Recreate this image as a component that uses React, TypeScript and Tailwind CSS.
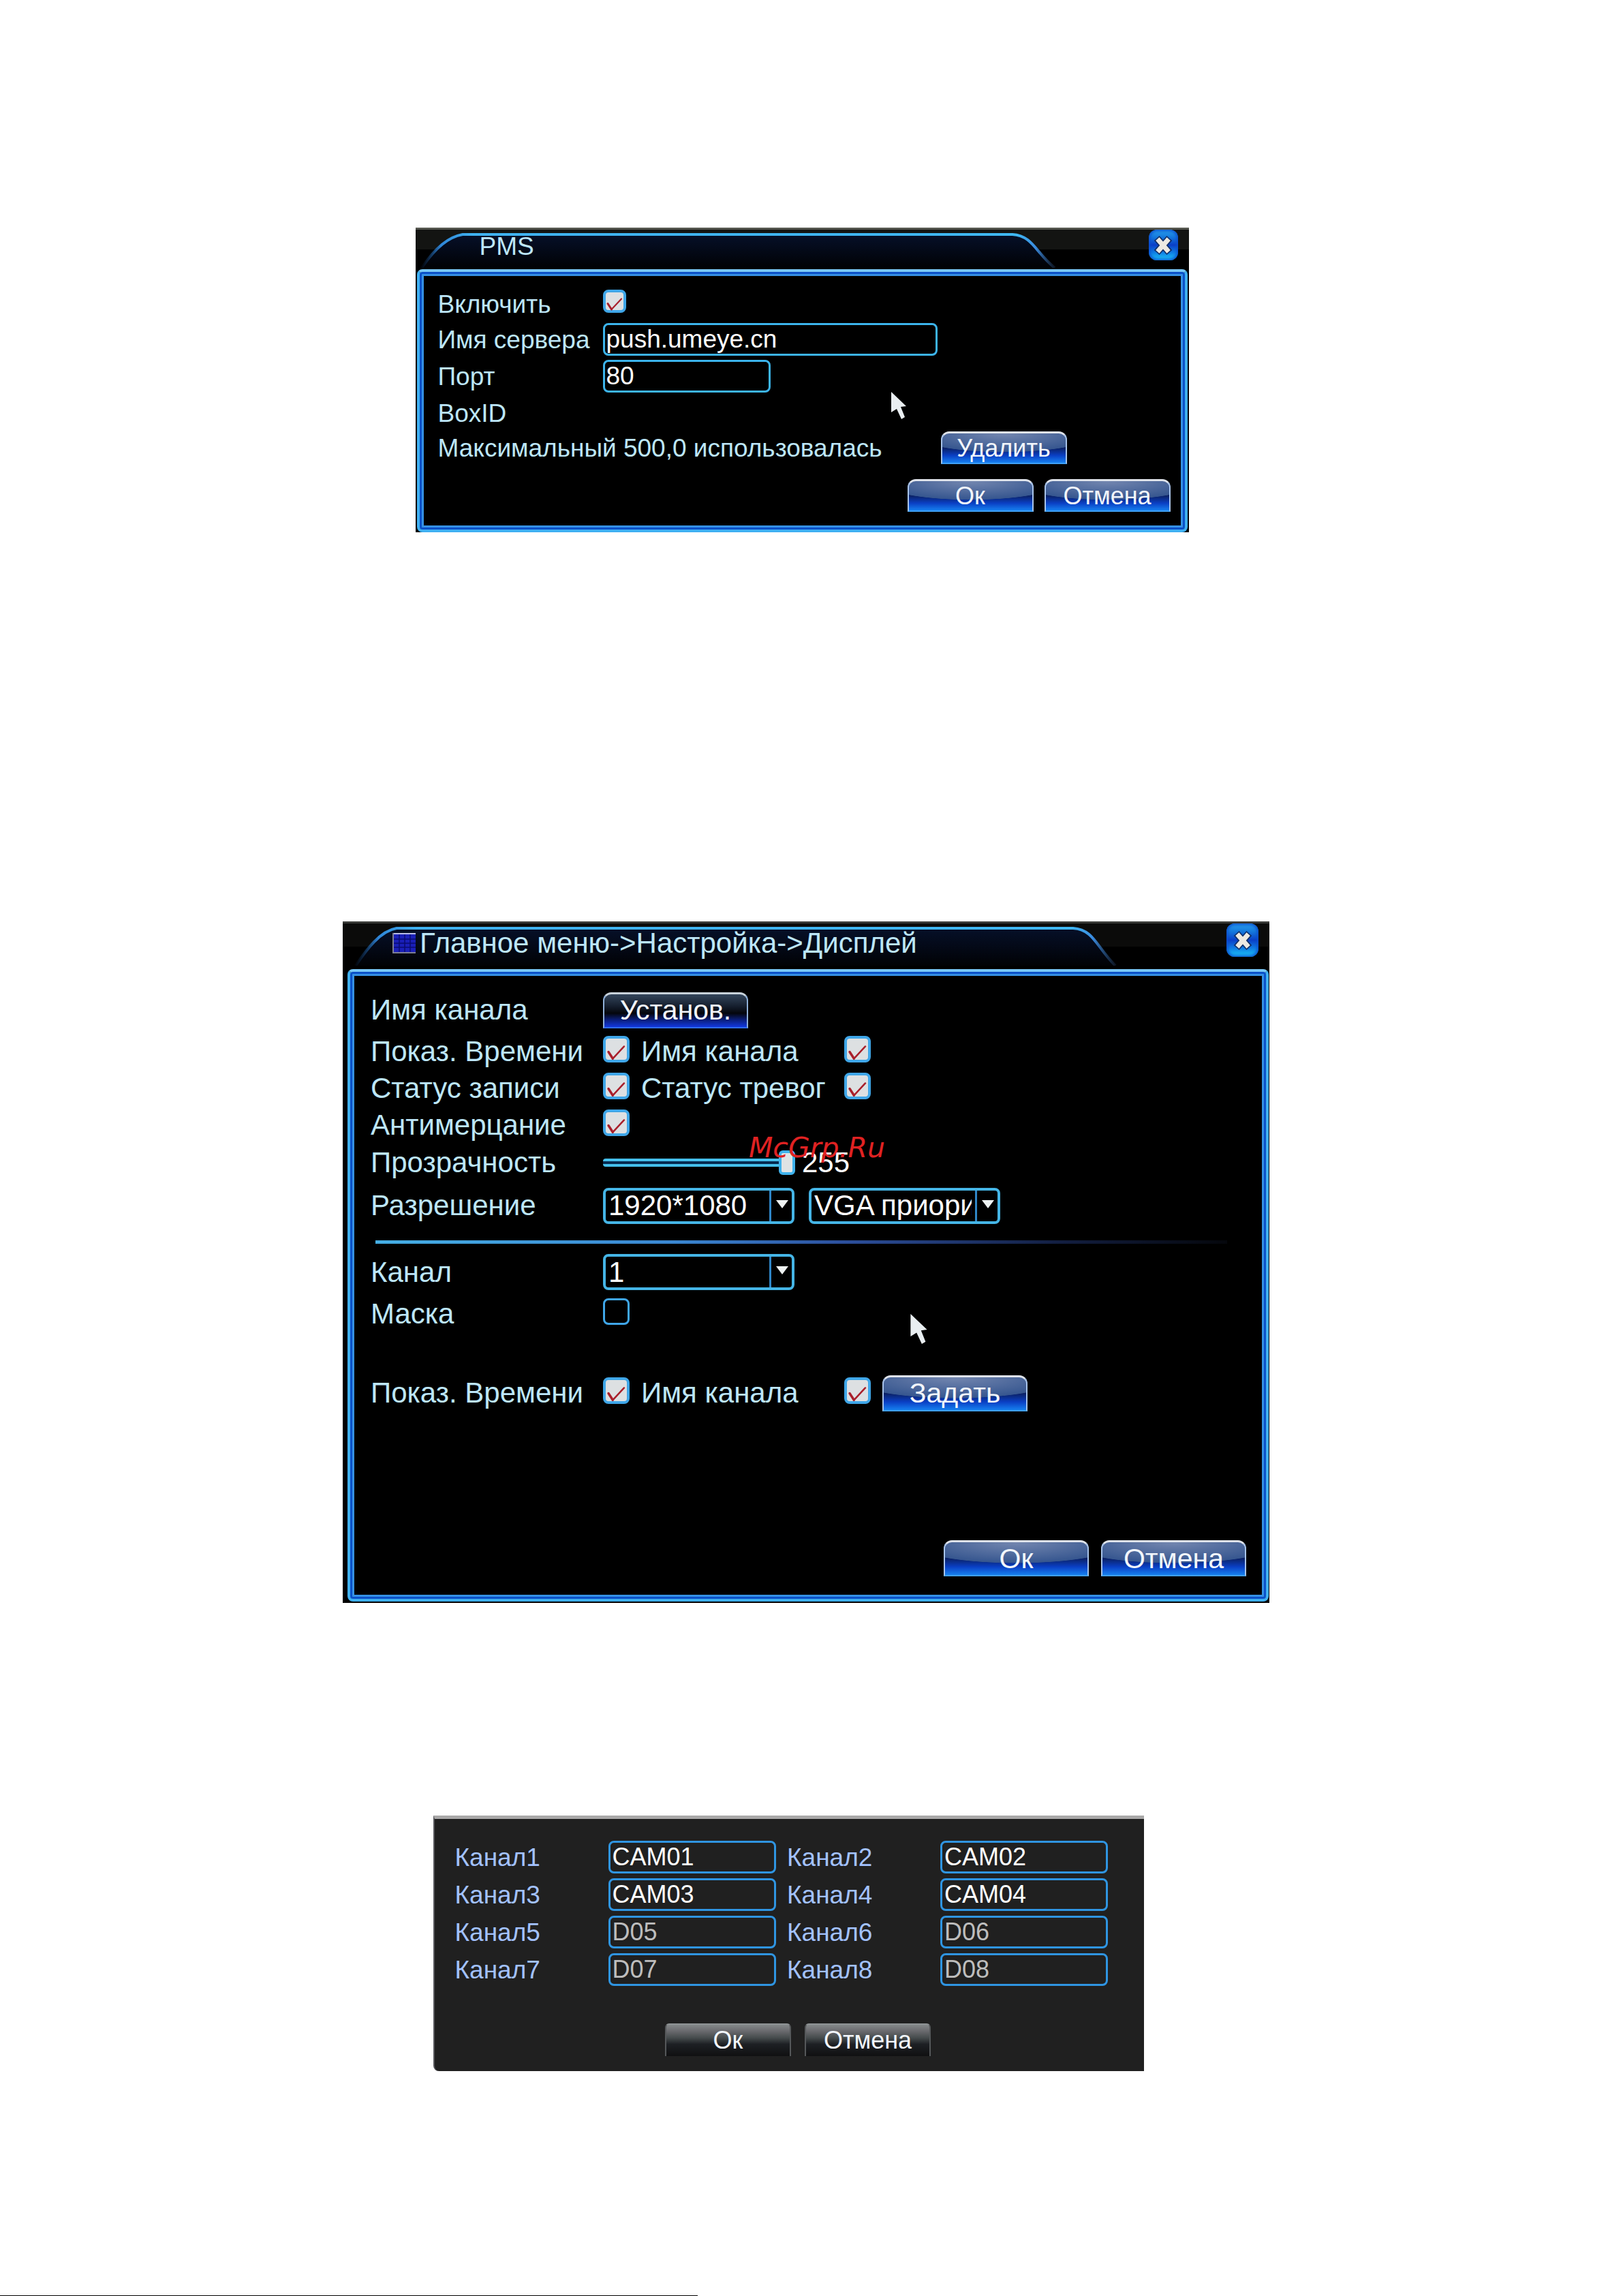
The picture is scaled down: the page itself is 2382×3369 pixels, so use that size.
import { useId } from "react";
import type { ReactNode } from "react";
import clsx from "clsx";

type Size = "md" | "lg";

const buttonSkins = {
  blue: "border-x-2 border-t-[3px] border-x-[#a9c4ea] border-t-[#dfe3ea] border-b-2 border-b-[#3fa0f5] rounded-t-xl bg-[radial-gradient(ellipse_75%_64%_at_50%_0%,#7487b0_0%,#36568f_98%,transparent_100%),linear-gradient(#0b1c55_45%,#0a3fc4_75%,#1680f0)]",
  dark: "border-x-2 border-t-[3px] border-x-[#8fb0d8] border-t-[#c9d3dc] border-b-2 border-b-[#2f6cf0] rounded-t-xl bg-[linear-gradient(#34465c_0%,#141d2c_38%,#04060c_58%,#0a1c70_76%,#1238e0_100%)]",
  gray: "border-x-2 border-t-2 border-x-[#55585a] border-t-[#8d9294] rounded-t-md bg-[linear-gradient(#85898a_0%,#6a6a6e_20%,#454b4c_42%,#1d2024_62%,#101011_100%)]",
};

const PanelButton = ({
  children,
  size = "md",
  skin = "blue",
}: {
  children: ReactNode;
  size?: Size;
  skin?: keyof typeof buttonSkins;
}) => (
  <button
    type="button"
    className={clsx(
      "shrink-0 leading-none text-[#f2f6fb]",
      size === "md" ? "h-12 w-[185px] text-[36px]" : "h-[53px] w-[213px] text-[41px]",
      buttonSkins[skin]
    )}
  >
    {children}
  </button>
);

const Checkbox = ({ id, size = "md", checked = false }: { id: string; size?: Size; checked?: boolean }) => (
  <span className={clsx("relative mb-2 block shrink-0", size === "md" ? "size-[34px]" : "size-[39px]")}>
    <input
      id={id}
      type="checkbox"
      defaultChecked={checked}
      className="peer block size-full appearance-none rounded-lg border-[3px] border-[#3fa6e8] bg-black checked:border-4 checked:bg-[#dde0e2]"
    />
    <svg
      viewBox="0 0 34 34"
      className="pointer-events-none absolute inset-0 hidden size-full peer-checked:block"
      fill="none"
      stroke="#a91f2b"
      strokeLinecap="round"
    >
      <path d="M7 20.5 L12.5 29" strokeWidth="3" />
      <path d="M12.5 29 L27 13.5" strokeWidth="2.2" />
    </svg>
  </span>
);

const SelectBox = ({ id, label, options }: { id: string; label?: string; options: string[] }) => (
  <div className="relative h-[53px] w-[281px] shrink-0 text-[42px]">
    <select
      id={id}
      aria-label={label}
      className="block size-full appearance-none rounded-lg border-4 border-[#45b5e6] bg-black pr-[38px] pl-1 leading-none text-white"
    >
      {options.map((option) => (
        <option key={option}>{option}</option>
      ))}
    </select>
    <span className="pointer-events-none absolute inset-y-1 right-[34px] w-[3px] bg-[#2f86c8]" />
    <svg viewBox="0 0 18 12" className="pointer-events-none absolute top-[18px] right-[9px] h-3 w-[18px]">
      <path d="M0 0 H18 L9 12 Z" fill="#eef2f2" />
    </svg>
  </div>
);

const Cursor = ({ className }: { className: string }) => (
  <svg viewBox="0 0 22 40" className={clsx("pointer-events-none absolute", className)}>
    <path d="M0 0 L22 21 L14 22 L20 37 L15 40 L8 25 L0 30 Z" fill="#e9eef1" />
  </svg>
);

const CloseButton = ({ size = "md" }: { size?: Size }) => (
  <button
    type="button"
    aria-label="Закрыть"
    className={clsx(
      "relative mr-4 grid shrink-0 place-items-center rounded-xl bg-[linear-gradient(#2ba4ee_0%,#1477dc_25%,#0a3fc8_50%,#0f7fe4_75%,#1fd0fb_100%)] shadow-[inset_0_0_4px_2px_#0b4fd0]",
      size === "md" ? "h-[45px] w-[43px]" : "h-[49px] w-[47px]"
    )}
  >
    <svg viewBox="0 0 24 24" className="size-7" fill="none">
      <path d="M4 3 L20 21 M20 3 L4 21" stroke="#10306a" strokeWidth="9" />
      <path d="M5 4 L19 20 M19 4 L5 20" stroke="#ece9e2" strokeWidth="6" />
    </svg>
  </button>
);

// Outline of the title tab: rises on the left, falls away on the right
const TabShape = ({ start, end, height }: { start: number; end: number; height: number }) => {
  const id = useId();
  const outline = `M${start} ${height} C${start + 16} ${height - 24} ${start + 36} 11 ${start + 60} 7 H${end - 62} C${end - 32} 9 ${end - 28} 34 ${end} ${height}`;

  return (
    <svg className="absolute top-0 left-0" width={end + 4} height={height} fill="none">
      <defs>
        <linearGradient id={`${id}-line`} gradientUnits="userSpaceOnUse" x1={start} y1="0" x2={end} y2="0">
          <stop offset="0" stopColor="#123a70" stopOpacity="0.1" />
          <stop offset="0.03" stopColor="#2f86d8" />
          <stop offset="0.08" stopColor="#3fb2f0" />
          <stop offset="0.94" stopColor="#3fb8f4" />
          <stop offset="0.97" stopColor="#3a8ce0" />
          <stop offset="1" stopColor="#2a4670" stopOpacity="0.3" />
        </linearGradient>
        <linearGradient id={`${id}-fill`} x1="0" y1="0" x2="0" y2="1">
          <stop offset="0" stopColor="#061029" />
          <stop offset="1" stopColor="#010205" />
        </linearGradient>
      </defs>
      <path d={outline} fill={`url(#${id}-fill)`} />
      <path d={outline} stroke={`url(#${id}-line)`} strokeWidth="4" />
    </svg>
  );
};

const panelFrame =
  "relative rounded-lg border-4 border-[#3fb0f2] border-t-[#79c8f6] shadow-[inset_0_0_0_3px_#0b50c8,inset_0_0_0_6px_#3590e4] bg-black";

const PmsDialog = () => (
  <section className="w-full max-w-[1135px] bg-black text-[37px] leading-none text-[#bde6f8]">
    <header className="relative flex h-[61px] items-start justify-between border-t-[3px] border-[#55564f] bg-[linear-gradient(#131412_50%,#000_50%)]">
      <TabShape start={9} end={938} height={56} />
      <h2 className="relative flex h-12 items-center pl-[94px]">PMS</h2>
      <CloseButton />
    </header>

    <div className={clsx(panelFrame, "mx-0.5 pt-[22px] pr-[21px] pb-[26px] pl-[27px]")}>
      <div className="flex h-[50px] items-center">
        <label htmlFor="pms-enable" className="w-[242px]">Включить</label>
        <Checkbox id="pms-enable" checked />
      </div>
      <div className="flex h-[54px] items-center">
        <label htmlFor="pms-server" className="w-[242px]">Имя сервера</label>
        <input
          id="pms-server"
          defaultValue="push.umeye.cn"
          className="h-12 w-[491px] rounded-lg border-[3px] border-[#3cb4ec] bg-black px-0.5 text-white"
        />
      </div>
      <div className="flex h-[54px] items-center">
        <label htmlFor="pms-port" className="w-[242px]">Порт</label>
        <input
          id="pms-port"
          defaultValue="80"
          className="h-12 w-[246px] rounded-lg border-[3px] border-[#3cb4ec] bg-black px-0.5 text-white"
        />
      </div>
      <div className="flex h-[54px] items-center">BoxID</div>
      <div className="flex h-12 items-center">
        <p className="w-[738px]">Максимальный 500,0 использовалась</p>
        <PanelButton>Удалить</PanelButton>
      </div>
      <div className="mt-[22px] flex justify-end gap-4">
        <PanelButton>Ок</PanelButton>
        <PanelButton>Отмена</PanelButton>
      </div>
      <Cursor className="top-[176px] left-[692px] h-10 w-[22px]" />
    </div>
  </section>
);

const MenuIcon = () => (
  <svg viewBox="0 0 34 30" className="h-[30px] w-[34px] shrink-0">
    <rect width="34" height="30" fill="#1a1fb8" />
    <path d="M2 9 H34 M2 15 H34 M2 21 H34 M10 2 V28 M18 2 V28 M26 2 V28" stroke="#0a0c70" strokeWidth="1.5" />
    <path d="M0 1 H34" stroke="#b8bce8" strokeWidth="2" />
    <path d="M1 0 V29 H34" fill="none" stroke="#7d7f94" strokeWidth="2" />
  </svg>
);

const displayChecks = [
  [
    { id: "show-time", label: "Показ. Времени" },
    { id: "show-name", label: "Имя канала" },
  ],
  [
    { id: "record-status", label: "Статус записи" },
    { id: "alarm-status", label: "Статус тревог" },
  ],
  [{ id: "anti-flicker", label: "Антимерцание" }],
];

const DisplayDialog = () => (
  <section className="w-full max-w-[1360px] bg-black pb-0.5 text-[42px] leading-none text-[#bde6f8]">
    <header className="relative flex h-[70px] items-start justify-between border-t-[3px] border-[#3a3b38] bg-[linear-gradient(#0b0b0a_50%,#000_50%)]">
      <TabShape start={19} end={1134} height={62} />
      <h2 className="relative flex h-[58px] items-center gap-1.5 pl-[73px]">
        <MenuIcon />
        Главное меню-&gt;Настройка-&gt;Дисплей
      </h2>
      <CloseButton size="lg" />
    </header>

    <div className={clsx(panelFrame, "mr-px ml-[7px] pt-7 pr-[29px] pb-[33px] pl-[30px]")}>
      <div className="mb-1.5 flex h-14 items-center">
        <span className="w-[341px]">Имя канала</span>
        <PanelButton size="lg" skin="dark">Установ.</PanelButton>
      </div>

      {displayChecks.map((row) => (
        <div key={row[0].id} className="flex h-[54px] items-center">
          {row.map((item, i) => (
            <div key={item.id} className="flex items-center">
              <label htmlFor={item.id} className={i === 0 ? "w-[341px]" : "ml-[17px] w-[298px]"}>
                {item.label}
              </label>
              <Checkbox id={item.id} size="lg" checked />
            </div>
          ))}
        </div>
      ))}

      <div className="flex h-[56px] items-center">
        <label htmlFor="opacity" className="w-[341px]">Прозрачность</label>
        <input
          id="opacity"
          type="range"
          min={0}
          max={255}
          defaultValue={255}
          className="h-9 w-[282px] appearance-none bg-transparent [&::-webkit-slider-runnable-track]:h-3 [&::-webkit-slider-runnable-track]:rounded-sm [&::-webkit-slider-runnable-track]:bg-[linear-gradient(#45c0ec_33%,#062a50_33%,#062a50_67%,#45c0ec_67%)] [&::-webkit-slider-thumb]:-mt-3 [&::-webkit-slider-thumb]:h-9 [&::-webkit-slider-thumb]:w-6 [&::-webkit-slider-thumb]:appearance-none [&::-webkit-slider-thumb]:rounded-md [&::-webkit-slider-thumb]:border-4 [&::-webkit-slider-thumb]:border-[#3fb2ec] [&::-webkit-slider-thumb]:bg-[#dfe3e4]"
        />
        <output htmlFor="opacity" className="ml-2.5 text-white">255</output>
      </div>

      <div className="flex h-[70px] items-center">
        <label htmlFor="resolution" className="w-[341px]">Разрешение</label>
        <div className="flex gap-[21px]">
          <SelectBox id="resolution" options={["1920*1080"]} />
          <SelectBox id="vga" label="VGA" options={["VGA приоритет"]} />
        </div>
      </div>

      <hr className="mt-4 mr-7 mb-[15px] ml-[7px] h-[5px] border-0 bg-[linear-gradient(90deg,#45aee4_0%,#3a86d0_35%,#2c4f9c_55%,#131f42_80%,#05070c_100%)]" />

      <div className="flex h-[53px] items-center">
        <label htmlFor="channel" className="w-[341px]">Канал</label>
        <SelectBox id="channel" options={["1"]} />
      </div>
      <div className="flex h-[70px] items-center">
        <label htmlFor="mask" className="w-[341px]">Маска</label>
        <Checkbox id="mask" size="lg" />
      </div>

      <div className="mt-[53px] flex h-14 items-center">
        <label htmlFor="channel-time" className="w-[341px]">Показ. Времени</label>
        <Checkbox id="channel-time" size="lg" checked />
        <label htmlFor="channel-name" className="ml-[17px] w-[298px]">Имя канала</label>
        <Checkbox id="channel-name" size="lg" checked />
        <div className="ml-[17px]">
          <PanelButton size="lg">Задать</PanelButton>
        </div>
      </div>

      <div className="mt-[188px] flex justify-end gap-[18px]">
        <PanelButton size="lg">Ок</PanelButton>
        <PanelButton size="lg">Отмена</PanelButton>
      </div>

      <Cursor className="top-[502px] left-[822px] h-[44px] w-[25px]" />
      <span className="pointer-events-none absolute top-[238px] left-[585px] font-['DejaVu_Sans',sans-serif] text-[41px] text-[#e02222] italic">
        McGrp.Ru
      </span>
    </div>
  </section>
);

const channels = [
  { name: "Канал1", value: "CAM01" },
  { name: "Канал2", value: "CAM02" },
  { name: "Канал3", value: "CAM03" },
  { name: "Канал4", value: "CAM04" },
  { name: "Канал5", value: "D05", disabled: true },
  { name: "Канал6", value: "D06", disabled: true },
  { name: "Канал7", value: "D07", disabled: true },
  { name: "Канал8", value: "D08", disabled: true },
];

const ChannelNamesDialog = () => (
  <section className="w-full max-w-[1043px] rounded-bl-lg border-t-[5px] border-l-2 border-t-[#a9a8a8] border-l-[#55555a] bg-[#202020] pt-8 pr-[52px] pb-[22px] pl-[30px] text-[37px] leading-none">
    <div className="grid grid-cols-2 gap-x-4 gap-y-[7px]">
      {channels.map((channel) => (
        <div key={channel.name} className="flex items-center">
          <label htmlFor={channel.name} className="w-[225px] text-[#a3c2ff]">{channel.name}</label>
          <input
            id={channel.name}
            defaultValue={channel.value}
            disabled={channel.disabled}
            className="h-12 w-[246px] rounded-lg border-[3px] border-[#2f95e2] bg-transparent px-[3px] text-[36px] text-white disabled:text-[#bdbdbd]"
          />
        </div>
      ))}
    </div>
    <div className="mt-[55px] flex justify-center gap-5 pl-12">
      <PanelButton skin="gray">Ок</PanelButton>
      <PanelButton skin="gray">Отмена</PanelButton>
    </div>
  </section>
);

const App = () => {
  return (
    <main className="flex min-h-screen flex-col bg-white pt-[334px] font-['Liberation_Sans',Arial,sans-serif]">
      <div className="flex justify-center pr-7">
        <PmsDialog />
      </div>
      <div className="mt-[571px] flex justify-center pr-4">
        <DisplayDialog />
      </div>
      <div className="mt-[312px] flex justify-center pr-[68px]">
        <ChannelNamesDialog />
      </div>
      <div className="mt-auto h-px w-[43%] bg-black" />
    </main>
  );
};

export default App;
